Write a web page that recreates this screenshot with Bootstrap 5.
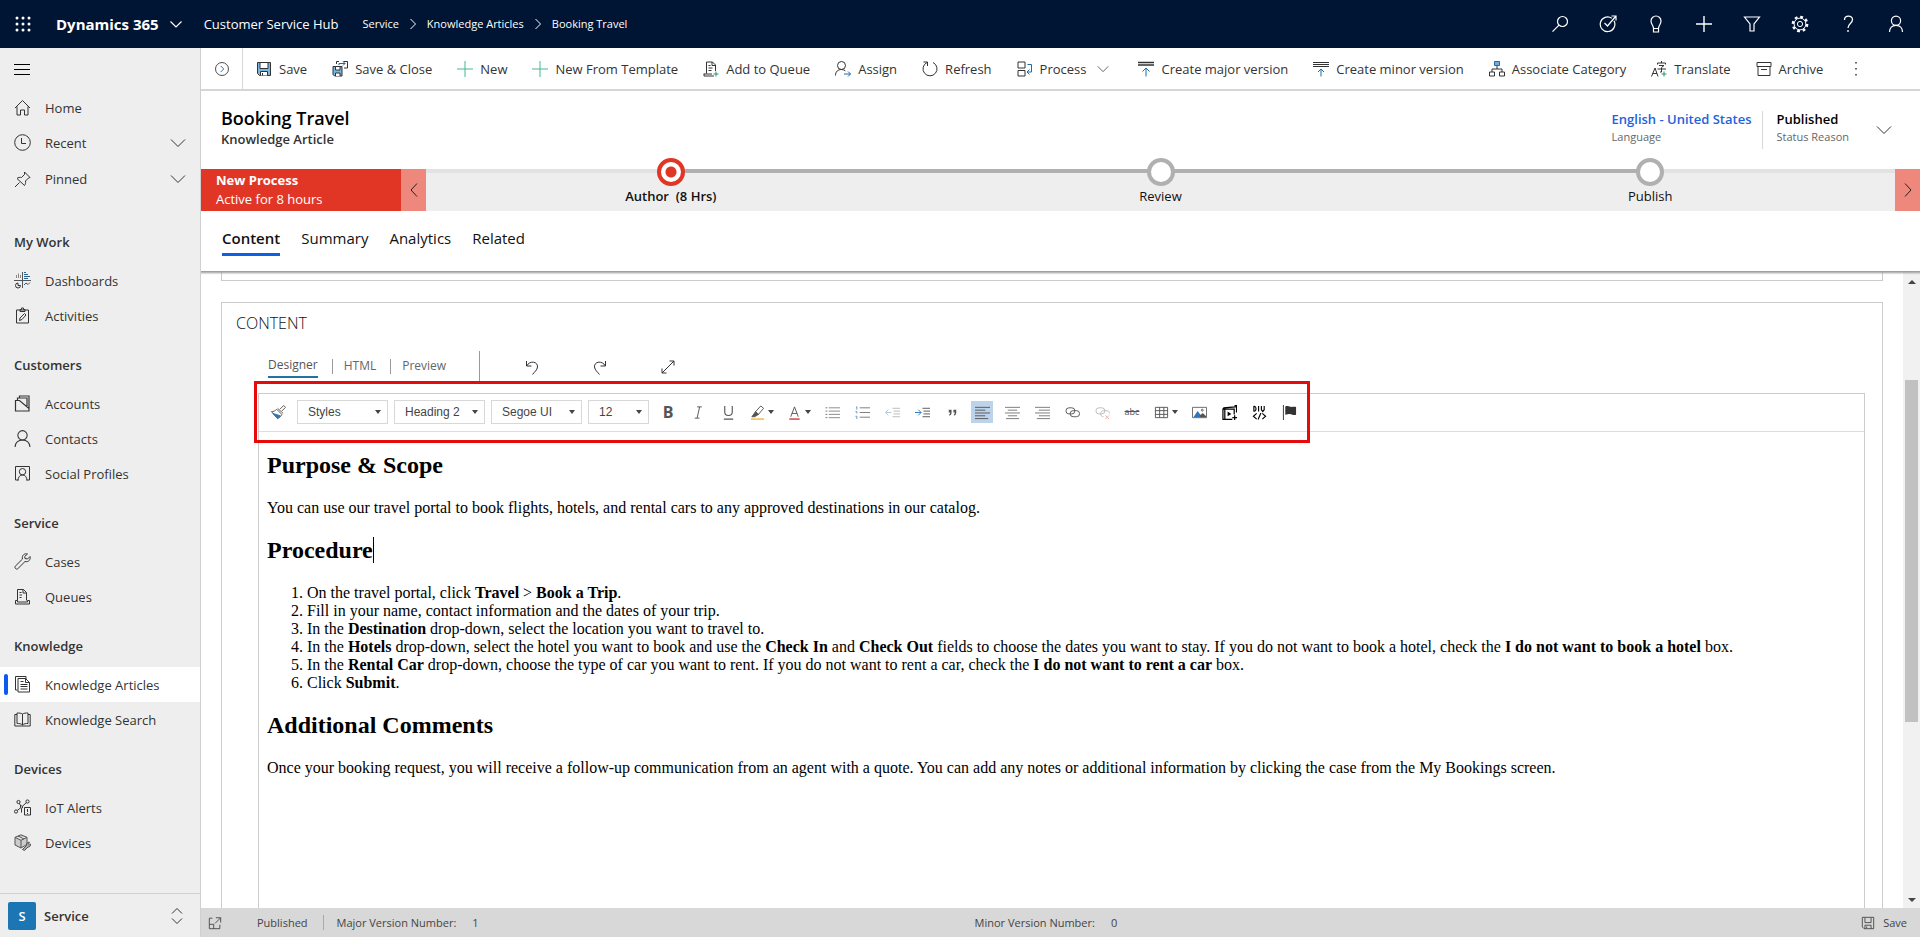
<!DOCTYPE html>
<html lang="en">
<head>
<meta charset="utf-8">
<meta name="viewport" content="width=device-width, initial-scale=1">
<title>Booking Travel - Knowledge Article - Dynamics 365</title>
<link href="https://cdn.jsdelivr.net/npm/bootstrap@5.3.0/dist/css/bootstrap.min.css" rel="stylesheet">
<style>
  :root { --navy:#001433; --panel:#eee; --line:#ccc; --ink:#333; --ui:"Open Sans","Noto Sans",sans-serif; }
  body { font-family:var(--ui); font-size:13px; line-height:20px; color:var(--ink); background:#fff; }
  a { color:inherit; text-decoration:none; }
  button { color:inherit; background:none; border:0; padding:0; font-size:inherit; line-height:inherit; }
  h1,h2,h3,p,ul,ol { margin:0; }
  svg { display:block; flex:none; fill:none; stroke:currentColor; width:16px; height:16px; }
  svg.w8 { width:8px; }
  svg.w12 { width:12px; }
  svg.w14 { width:14px; }
  .sb { font-weight:600; }
  .shrinkable { min-width:0; min-height:0; }

  .app-header { height:48px; background:var(--navy); color:#fff; }
  .app-header .waffle { width:38px; padding-left:15px; margin-right:18px; }
  .brand { font-size:15px; font-weight:700; margin-right:11px; }
  .hub { margin-left:22px; margin-right:24px; }
  .crumbs { font-size:11px; gap:10px; }
  .tools button { width:48px; height:48px; display:flex; align-items:center; justify-content:center; }
  .tools svg { width:18px; height:18px; }

  .side { width:201px; background:var(--panel); border-right:1px solid #d0d0d0; flex:none; }
  .side .burger { height:42px; padding-left:14px; }
  .side ul { list-style:none; padding:0; }
  .side li a, .side li button { height:35px; width:100%; display:flex; align-items:center; padding:0 14px; gap:14px; }
  .side li svg:first-child { width:17px; height:17px; }
  .side li.pinned > button { height:38px; }
  .side .first-group { margin-bottom:12px; }
  .side h2 { font-size:13px; line-height:20px; font-weight:600; padding:22px 14px 11px; }
  .side .here { background:#fff; position:relative; }
  .side .here::before { content:""; position:absolute; left:4px; top:7px; width:4px; height:21px; border-radius:2px; background:#0b5cee; }
  .area { height:44px; border-top:1px solid #d0d0d0; padding:0 17px 0 8px; }
  .area .tile { width:28px; height:28px; background:#1b76b3; color:#fff; border-radius:2px; }

  .cmd { height:43px; border-bottom:2px solid #d6d6d6; }
  .cmd .round { width:42px; border-right:1px solid #d8d8d8; }
  .cmd-list { padding-left:13px; gap:25px; }
  .cmd-list button, .cmd-list .pair { display:flex; align-items:center; gap:7px; white-space:nowrap; }
  .green { color:#47b98c; }

  .record { height:78px; padding:14px 28px 0 20px; }
  .record h1 { font-size:18px; line-height:26px; font-weight:600; color:#000; }
  .record .kind { line-height:16px; }
  .record .field { line-height:20px; padding:4px 0; }
  .record .field small { display:block; font-size:11px; line-height:16px; color:#666; }
  .record .split { width:1px; height:38px; background:#d8d8d8; margin:6px 13px 0 11px; }
  .record .more { margin:17px 0 0 27px; }
  .lang { color:#1f62dd; }

  .process { height:42px; background:var(--panel); flex:none; }
  .process .name { width:200px; background:#e13626; color:#fff; padding:2px 15px 0; line-height:19px; }
  .process .arrow { width:25px; background:#ef887c; color:#222; display:flex; align-items:center; justify-content:center; }
  .stage { flex:1; border-top:4px solid #b0b0b0; border-image:linear-gradient(90deg,#b0b0b0,#b0b0b0) 1; color:#111; display:flex; flex-direction:column; align-items:center; }
  .stage:first-of-type { border-image:linear-gradient(90deg,#e2e2e2 50%,#b0b0b0 50%) 1; }
  .stage:last-of-type { border-image:linear-gradient(90deg,#b0b0b0 50%,#e2e2e2 50%) 1; }
  .node { width:28px; height:28px; margin-top:-15px; border-radius:50%; border:4px solid #b0b0b0; background:#fff; flex:none; }
  .node.now { border-color:#e03626; background:radial-gradient(circle,#e03626 5px,#fff 6px); }

  .form-tabs { height:60px; padding:14px 21px 0; gap:21px; font-size:15px; line-height:26px; color:#111; box-shadow:0 1px 2px 1px #999; position:relative; flex:none; clip-path:inset(0 0 -4px 0); }
  .form-tabs a { padding-bottom:2px; height:31px; }
  .form-tabs .on { font-weight:600; border-bottom:3px solid #0d5fe3; }

  .sections { padding:0 20px; }
  .prev { height:10px; border:1px solid var(--line); border-top:0; margin-bottom:21px; }
  .sect { border:1px solid var(--line); border-bottom:0; padding:8px 17px 0 14px; }
  .sect > h2 { font-size:16px; line-height:24px; font-weight:300; color:#111; }
  .modes { font-size:12px; color:#666; margin-left:32px; margin-top:16px; }
  .modes .rule { width:1px; height:15px; background:#999; margin:0 11px 0 14px; }
  .modes .on { border-bottom:2px solid #2372a3; line-height:22px; color:#555; }
  .modes .bar { width:1px; height:30px; background:#999; margin-left:33px; }
  .modes .acts { gap:52px; margin-left:44px; color:#333; padding-top:2px; }
  .editor { margin-left:22px; margin-top:12px; border:1px solid var(--line); border-bottom:0; }
  .fmt { height:38px; border-bottom:1px solid #ddd; }
  .fmt-in { position:relative; width:max-content; height:36px; padding:0 5px 0 8px; }
  .fmt-in::after { content:""; position:absolute; inset:-13px -5px -13px -5px; border:3px solid #e60b0b; pointer-events:none; }
  .picks { gap:6px; }
  .fmt .form-select { width:91px; height:24px; padding:0 20px 0 10px; border:1px solid #d8d8d8; border-radius:0; color:#444; font:12px/22px "Liberation Sans",sans-serif; background-position:right 6px center; background-size:6px 4px;
    background-image:url("data:image/svg+xml,%3Csvg xmlns='http://www.w3.org/2000/svg' viewBox='0 0 6 4'%3E%3Cpath d='M0 0h6L3 4z' fill='%23444'/%3E%3C/svg%3E"); }
  .fmt .form-select.size { width:61px; }
  .fmt button { width:22px; height:22px; display:flex; align-items:center; justify-content:center; color:#555; }
  .fmt button svg { width:15px; height:15px; }
  .fmt button.drop { width:29px; gap:3px; }
  .fmt button.drop::after { content:""; border:3px solid transparent; border-top:4px solid #444; border-bottom:0; }
  .fmt .pressed { background:#bdd3ec; }
  .fmt .faint { opacity:.4; }
  .fmt .strike { font-size:9px; text-decoration:line-through; }
  .doc { font:16px/18px "Liberation Serif",serif; color:#000; padding:20px 8px; outline:0; }
  .doc h2 { font-size:24px; line-height:27px; font-weight:700; margin-bottom:20px; }
  .doc p, .doc ol { margin-bottom:20px; }
  .doc ol { padding-left:40px; }
  .caret { border-right:1px solid #000; }

  .vbar { width:17px; background:#f1f1f1; padding:9px 2px 6px; color:#444; }
  .vbar .up, .vbar .down { border:4px solid transparent; }
  .vbar .up { border-bottom-color:#444; border-top:0; }
  .vbar .down { border-top-color:#444; border-bottom:0; }
  .vbar .track { flex:1; width:100%; padding:96px 0 0; }
  .vbar .thumb { height:66%; background:#c1c1c1; }

  .status { height:29px; background:#d8d8d8; font-size:11px; color:#444; flex:none; }
  .status .left { width:45%; padding-left:7px; }
  .status .state { margin-left:35px; }
  .status .sep { width:1px; height:15px; background:#aaa; margin:0 13px 0 15px; }
  .status .keep { margin-right:13px; }
</style>
</head>
<body class="vh-100 d-flex flex-column overflow-hidden">

<svg class="d-none" aria-hidden="true">
  <symbol id="down" viewBox="0 0 16 16"><path d="M1 4.500l7 7 7-7"/></symbol>
  <symbol id="plus" viewBox="0 0 16 16"><path d="M8 0v16M0 8h16"/></symbol>
  <symbol id="person" viewBox="0 0 16 16"><circle cx="8" cy="5" r="4.400"/><path d="M1 16c0-4 3-6.600 7-6.600s7 2.600 7 6.600"/></symbol>
  <symbol id="save" viewBox="0 0 16 16"><path d="M1.500 1.500h13v13h-11l-2-2z" fill="#7db6e0"/><path d="M4 1.500h8v6H4z" fill="#fff"/><path d="M4.500 14.500v-4h7v4" fill="#fff"/><path d="M6.500 12v2.500"/></symbol>
</svg>

<header class="app-header d-flex align-items-center flex-shrink-0">
  <button class="waffle" aria-label="App launcher"><svg viewBox="0 0 16 16"><g fill="#fff" stroke="none"><circle cx="2" cy="2" r="1.500"/><circle cx="8" cy="2" r="1.500"/><circle cx="14" cy="2" r="1.500"/><circle cx="2" cy="8" r="1.500"/><circle cx="8" cy="8" r="1.500"/><circle cx="14" cy="8" r="1.500"/><circle cx="2" cy="14" r="1.500"/><circle cx="8" cy="14" r="1.500"/><circle cx="14" cy="14" r="1.500"/></g></svg></button>
  <a href="#" class="brand">Dynamics 365</a>
  <button aria-label="Switch app"><svg class="w12" viewBox="0 0 12 16"><path d="M.5 5.500L6 11l5.500-5.500" stroke-width="1.200"/></svg></button>
  <a href="#" class="hub">Customer Service Hub</a>
  <nav class="crumbs d-flex align-items-center" aria-label="Breadcrumb">
    <a href="#">Service</a><svg class="w8" viewBox="0 0 8 16"><path d="M1.500 3l5 5-5 5"/></svg>
    <a href="#">Knowledge Articles</a><svg class="w8" viewBox="0 0 8 16"><path d="M1.500 3l5 5-5 5"/></svg>
    <span>Booking Travel</span>
  </nav>
  <div class="tools d-flex ms-auto">
    <button aria-label="Search"><svg viewBox="0 0 18 18"><circle cx="11.500" cy="6.500" r="5" stroke-width="1.200"/><path d="M8 10.200L1.500 16.700" stroke-width="1.200"/></svg></button>
    <button aria-label="Task flow"><svg viewBox="0 0 18 18"><path d="M12.800 3.300A7.300 7.300 0 1 0 15 5.800M12.500 1h4.500v4.500M17 1L8.500 11l-3-3" stroke-width="1.200"/></svg></button>
    <button aria-label="Insights"><svg viewBox="0 0 18 18"><path d="M6.500 13.500c0-3-2.500-4-2.500-7.500a5 5 0 0 1 10 0c0 3.500-2.500 4.500-2.500 7.500v3.500h-5zM6.500 13.500h5" stroke-width="1.200"/></svg></button>
    <button aria-label="Quick create"><svg viewBox="0 0 18 18"><path d="M9 1v16M1 9h16" stroke-width="1.400"/></svg></button>
    <button aria-label="Filter"><svg viewBox="0 0 18 18"><path d="M1.500 2h15L11 9v7H7V9z" stroke-width="1.200"/></svg></button>
    <button aria-label="Settings"><svg viewBox="0 0 18 18"><circle cx="9" cy="9" r="2.600"/><circle cx="9" cy="9" r="5.900"/><circle cx="9" cy="9" r="7.200" stroke-width="2.300" stroke-dasharray="2.830 2.825"/></svg></button>
    <button aria-label="Help"><svg viewBox="0 0 18 18"><path d="M5.500 5c0-5 8-5 8-.5 0 4-4.500 4-4.500 8.500M9 15v2" stroke-width="1.300"/></svg></button>
    <button aria-label="Account"><svg viewBox="0 0 18 18"><circle cx="9" cy="5.700" r="4.600" stroke-width="1.200"/><path d="M2.500 17c0-4 2.500-6.700 6.500-6.700s6.500 2.700 6.500 6.700" stroke-width="1.200"/></svg></button>
  </div>
</header>

<div class="d-flex flex-fill shrinkable">
  <aside class="side d-flex flex-column">
    <button class="burger d-flex align-items-center" aria-label="Collapse menu"><svg viewBox="0 0 16 16"><path d="M0 3.500h16M0 8.500h16M0 13.500h16" stroke="#000"/></svg></button>
    <nav class="flex-fill" aria-label="Site map">
      <ul class="first-group">
        <li><a href="#"><svg viewBox="0 0 17 17"><path d="M1 9l7.500-7.500L16 9M3 7.500v8.500h3.500v-5h4v5H14V7.500"/></svg>Home</a></li>
        <li><button><svg viewBox="0 0 17 17"><circle cx="8.500" cy="8.500" r="7.800"/><path d="M7.500 4v5.500H12"/></svg>Recent<svg class="ms-auto"><use href="#down"/></svg></button></li>
        <li class="pinned"><button><svg viewBox="0 0 17 17"><path d="M1 16l4.500-4.500M10.500 1l5.500 5.500-1.500.5-3 3c.5 2-.3 3.500-1 4.500L3 7.500C4 6.500 6 6 7.500 6.500l3-3z"/></svg>Pinned<svg class="ms-auto"><use href="#down"/></svg></button></li>
      </ul>
      <h2>My Work</h2>
      <ul>
        <li><a href="#"><svg viewBox="0 0 17 17"><path d="M2.500 6V3M4.500 6V1.500M6.500 6V3" stroke="#888"/><path d="M8.500 0v16M0 8.500h17" stroke="#555"/><path d="M10 2.500h4M10 4.500h6M10 .5h2M10 6.500h4M10 13l2-2 2 1.500 2-2" stroke="#27618f"/><path d="M4 11a2.500 2.500 0 1 0 2.500 2.500H4z"/></svg>Dashboards</a></li>
        <li><a href="#"><svg viewBox="0 0 17 17"><path d="M2.500 3h12v13h-12zM6 4.500V2.500h1.500V1h2v1.500H11v2zM5.500 13.500l.5-2.500 4.500-4.500 1.500 1.500L8 12.500z"/></svg>Activities</a></li>
      </ul>
      <h2>Customers</h2>
      <ul>
        <li><a href="#"><svg viewBox="0 0 17 17"><path d="M1.500 5.500h4l9.500 8V16H1.500zM3.500 5V3h9.500v8M5.500 2.500V1H15v12" stroke-width="1.200"/></svg>Accounts</a></li>
        <li><a href="#"><svg><use href="#person"/></svg>Contacts</a></li>
        <li><a href="#"><svg viewBox="0 0 17 17"><path d="M4.500 15H1.500V1.500h14V15h-3"/><circle cx="8.500" cy="6.700" r="3.200"/><path d="M4 15.500c0-3.500 2-5.500 4.500-5.500s4.500 2 4.500 5.500"/></svg>Social Profiles</a></li>
      </ul>
      <h2>Service</h2>
      <ul>
        <li><a href="#"><svg viewBox="0 0 17 17"><path d="M13.500 1c-3-1-6 1.500-5 5L1.300 13.200c-1.300 1.500 1 3.800 2.500 2.500L11 8.500c3.500 1 6-2 5-5L13.500 6 11 5.500l-.3-2z"/></svg>Cases</a></li>
        <li><a href="#"><svg viewBox="0 0 17 17"><path d="M3.500 12.500v-11h6l3 3v8M9 1.500V5h3.500M1.500 12.500h2v1.500h10v-1.500h2V16h-14zM5.500 4.500h2M5.500 7h2.500M5.500 9.500h2"/></svg>Queues</a></li>
      </ul>
      <h2>Knowledge</h2>
      <ul>
        <li class="here"><a href="#" aria-current="page"><svg viewBox="0 0 17 17"><path d="M3.500 14H1.500V.5H12V3M4 2.500h7.500l4 4V16H4zM11.500 2.500v4h4M6.500 5.500h3M6.500 8.500h7M6.500 10.500h7M6.500 13h7"/></svg>Knowledge Articles</a></li>
        <li><a href="#"><svg viewBox="0 0 17 17"><path d="M8.500 3C7 2 5 2 3 2v10.500c2 0 4 0 5.500 1.500 1.500-1.500 3.500-1.500 5.500-1.500V2c-2 0-4 0-5.500 1zM8.500 3v11M3 3.500H.8V15h15.400V3.500H14"/></svg>Knowledge Search</a></li>
      </ul>
      <h2>Devices</h2>
      <ul>
        <li><a href="#"><svg viewBox="0 0 17 17"><circle cx="4.500" cy="3" r="1.600"/><circle cx="13.500" cy="2.500" r="1.600"/><circle cx="2" cy="12.500" r="1.600"/><circle cx="7.500" cy="8" r="1.200"/><path d="M5.300 4.300l1.500 2.700M8.500 7.200l4-3.700M6.700 8.800l-3.500 2.700M7.500 9.500v4M10.500 8.500h6V16h-6zM13.500 10v3M13.500 14v1"/></svg>IoT Alerts</a></li>
        <li><a href="#"><svg viewBox="0 0 17 17"><path d="M7 .8l6 2.500v7L7 14l-6-3V3.300zM1 3.300l6 3 6-3M7 6.300V14M4 2l6 3" fill="#ccc" stroke="#555"/><path d="M8.500 15.500l4-4c-.5-2 1-3.500 3-3.200L14.500 10l1 1 1.200-1c.3 2-1.200 3-2.700 3l-3.500 3.500z" fill="#aaa" stroke="#555"/></svg>Devices</a></li>
      </ul>
    </nav>
    <button class="area d-flex align-items-center">
      <span class="tile sb d-flex align-items-center justify-content-center">S</span>
      <span class="sb ms-2">Service</span>
      <svg class="w12 ms-auto" viewBox="0 0 12 16"><path d="M1 5.500l5-5 5 5M1 10.500l5 5 5-5"/></svg>
    </button>
  </aside>

  <main class="d-flex flex-column flex-fill shrinkable">
    <div class="cmd d-flex flex-shrink-0" role="toolbar" aria-label="Commands">
      <button class="round d-flex align-items-center justify-content-center" aria-label="Open record set"><svg class="w14" viewBox="0 0 16 16"><circle cx="8" cy="8" r="7.400"/><path d="M6.500 4.500L10 8l-3.500 3.500" stroke="#1b5e9e"/></svg></button>
      <div class="cmd-list d-flex align-items-center">
        <button><svg><use href="#save"/></svg>Save</button>
        <button><svg viewBox="0 0 16 16"><path d="M1 5.500h9V15H2.500L1 13.500z" fill="#7db6e0"/><path d="M3.500 5.500h4.500v3.500H3.500zM3.500 15v-3h4.500v3" fill="#fff"/><path d="M4.500 3V.5H7M11.500.5h4V7M15.500 7H12"/><path d="M7 4V2.500h6M11 .5l2 2-2 2" stroke="#1b6cab"/></svg>Save &amp; Close</button>
        <button><svg class="green"><use href="#plus"/></svg>New</button>
        <button><svg class="green"><use href="#plus"/></svg>New From Template</button>
        <button><svg viewBox="0 0 16 16"><path d="M3.500 12.500V1h6l3 3v6M9 1v3.500h3.500M1 12.500V15h10M1 13h8M5.500 4.500h2M5.500 7h4M5.500 9.500h3"/><path d="M13 10.500v5M10.500 13h5" stroke="#1a9a63"/></svg>Add to Queue</button>
        <button><svg viewBox="0 0 16 16"><circle cx="6.500" cy="4.500" r="4"/><path d="M.5 14.500c0-4 2.500-6 6-6 1.500 0 2.800.5 3.800 1.300"/><path d="M9 13h6.500M13 10.500l2.500 2.500-2.500 2.500" stroke="#1b6cab"/></svg>Assign</button>
        <button><svg viewBox="0 0 16 16"><path d="M5 1.500A7 7 0 1 0 11 1.500M5.500 5V1H1.500"/></svg>Refresh</button>
        <div class="pair"><button><svg viewBox="0 0 16 16"><path d="M1 1h7v6H1zM1 9.500h7v5.500H1z"/><path d="M10.500 3.500h4V11H10M12.500 8.500L10 11l2.500 2.500" stroke="#1b6cab"/></svg>Process</button>
        <button class="px-1" aria-label="More process commands"><svg class="w12"><use href="#down"/></svg></button></div>
        <button><svg viewBox="0 0 16 16"><path d="M0 1.500h16M0 4h16" stroke-width="1.300"/><path d="M8 15.500V7M4.500 10.500L8 7l3.500 3.500" stroke="#1b6cab"/></svg>Create major version</button>
        <button><svg viewBox="0 0 16 16"><path d="M0 1.500h16M0 3.500h16M0 5.500h16"/><path d="M8 15.500V8M5 11l3-3 3 3" stroke="#1b6cab"/></svg>Create minor version</button>
        <button><svg viewBox="0 0 16 16"><path d="M5.500.5h5v4h-5z" fill="#6fb0e0" stroke="#1b6cab"/><path d="M8 5v3M3 11V8h10v3M.5 11h5v4h-5zM10.500 11h5v4h-5z"/></svg>Associate Category</button>
        <button><svg viewBox="0 0 16 16"><path d="M.5 15.500L4 7l3 8.500M1.500 12.500h4.500M6.500 3.500V2h8v1.500M10.500 2V0M8 4.500h5L10.500 6.500V11H9M6.500 8h8.500"/><path d="M13 10.500v5M10.500 13h5" stroke="#1a9a63"/></svg>Translate</button>
        <button><svg viewBox="0 0 16 16"><path d="M1 1.500h14v4H1zM2 5.500v9h12v-9M5 8.500h6"/></svg>Archive</button>
        <button aria-label="More commands"><svg viewBox="0 0 16 16"><path d="M8 1v1.500M8 7v1.500M8 13v1.500" stroke-width="1.500"/></svg></button>
      </div>
    </div>

    <div class="record d-flex flex-shrink-0">
      <div class="flex-fill">
        <h1>Booking Travel</h1>
        <div class="kind sb">Knowledge Article</div>
      </div>
      <div class="d-flex align-items-start">
        <div class="field"><a href="#" class="lang sb">English - United States</a><small>Language</small></div>
        <div class="split"></div>
        <div class="field"><span class="sb text-black">Published</span><small>Status Reason</small></div>
        <button class="more" aria-label="Header details"><svg><use href="#down"/></svg></button>
      </div>
    </div>

    <div class="process d-flex">
      <header class="name"><div class="fw-bold">New Process</div><div>Active for 8 hours</div></header>
      <button class="arrow" aria-label="Previous stage"><svg viewBox="0 0 16 16"><path d="M11 1.500L5 8l6 6.500"/></svg></button>
      <div class="d-flex flex-fill">
        <div class="stage"><span class="node now"></span><span class="sb">Author&nbsp; (8 Hrs)</span></div>
        <div class="stage"><span class="node"></span><span>Review</span></div>
        <div class="stage"><span class="node"></span><span>Publish</span></div>
      </div>
      <button class="arrow" aria-label="Next stage"><svg viewBox="0 0 16 16"><path d="M5 1.500L11 8l-6 6.500"/></svg></button>
    </div>

    <nav class="form-tabs d-flex" aria-label="Form tabs">
      <a href="#" class="on">Content</a><a href="#">Summary</a><a href="#">Analytics</a><a href="#">Related</a>
    </nav>

    <div class="d-flex flex-fill overflow-hidden shrinkable">
      <div class="sections d-flex flex-column flex-fill">
        <div class="prev flex-shrink-0"></div>
        <section class="sect d-flex flex-column flex-fill">
          <h2>CONTENT</h2>
          <div class="modes d-flex align-items-center">
            <a href="#" class="on">Designer</a><span class="rule"></span><a href="#">HTML</a><span class="rule"></span><a href="#">Preview</a>
            <span class="bar"></span>
            <div class="acts d-flex">
              <button aria-label="Undo"><svg viewBox="0 0 16 16"><path d="M2.500 2v5h5M2.500 7C6 1 14 2.500 13.500 8c-.3 3-3 5-5 7.500"/></svg></button>
              <button aria-label="Redo"><svg viewBox="0 0 16 16"><path d="M13.500 2v5h-5M13.500 7C10 1 2 2.500 2.500 8c.3 3 3 5 5 7.500"/></svg></button>
              <button aria-label="Expand"><svg viewBox="0 0 16 16"><path d="M2 14L14 2M9.500 2H14v4.500M2 9.500V14h4.500"/></svg></button>
            </div>
          </div>
          <div class="editor flex-fill">
            <div class="fmt">
              <div class="fmt-in d-flex align-items-center gap-2" role="toolbar" aria-label="Formatting">
                <button aria-label="Copy format"><svg viewBox="0 0 16 16"><path d="M9.500 4.500L13.500.5l2 2-4 4M6 4.500l5.500 5.500M7 3.500l6 5.500M6 4.500C4.500 6.500 2.500 7 .5 7L7 14.500C9 13.500 11 12 11.500 10"/><path d="M2 9l8 2.500L7 14.500z" fill="#2f75b8" stroke="#2f75b8"/></svg></button>
                <div class="picks d-flex">
                  <select class="form-select" aria-label="Styles"><option>Styles</option></select>
                  <select class="form-select" aria-label="Paragraph format"><option>Heading 2</option></select>
                  <select class="form-select" aria-label="Font"><option>Segoe UI</option></select>
                  <select class="form-select size" aria-label="Size"><option>12</option></select>
                </div>
                <button class="fw-bold fs-6" aria-label="Bold">B</button>
                <button aria-label="Italic"><svg viewBox="0 0 16 16"><path d="M6.500 2h5M4 14h5M9.200 2L6.500 14"/></svg></button>
                <button aria-label="Underline"><svg viewBox="0 0 16 16"><path d="M4 1v6.500c0 5 8 5 8 0V1M3 15h10" stroke-width="1.200"/></svg></button>
                <button class="drop" aria-label="Highlight"><svg viewBox="0 0 16 16"><path d="M6 7l5.500-6 3 2.500L9 10z"/><path d="M6 7l3 3-4 2.500H2z" fill="#555"/><path d="M1 15h14" stroke="#efb93c" stroke-width="1.500"/></svg></button>
                <button class="drop" aria-label="Text colour"><svg viewBox="0 0 16 16"><path d="M4 12.500L8 2l4 10.500M5.200 9h5.600"/><path d="M2.500 15h11" stroke="#d23b33" stroke-width="1.500"/></svg></button>
                <button aria-label="Bulleted list"><svg viewBox="0 0 16 16"><path d="M4 3h12M4 6.500h12M4 10h12M4 13.500h12" stroke="#888"/><path d="M.5 3h2M.5 6.500h2M.5 10h2M.5 13.500h2" stroke="#777"/></svg></button>
                <button aria-label="Numbered list"><svg viewBox="0 0 16 16"><path d="M5 3h11M5 8h11M5 13h11" stroke="#777"/><path d="M1 2h1v3M.5 7h1.500v2M.5 12h1.500v3" stroke="#5a93cc"/></svg></button>
                <button class="faint" aria-label="Decrease indent"><svg viewBox="0 0 16 16"><path d="M8 3.500h8M9 6.500h7M9 9.500h7M8 12.500h8"/><path d="M7 8H.5M3.500 5L.5 8l3 3" stroke="#2f75b8"/></svg></button>
                <button aria-label="Increase indent"><svg viewBox="0 0 16 16"><path d="M8 3.500h8M9 6.500h7M9 9.500h7M8 12.500h8"/><path d="M0 8h6.500M3.500 5l3 3-3 3" stroke="#2f75b8"/></svg></button>
                <button aria-label="Block quote"><svg viewBox="0 0 16 16"><path d="M4 5h3v3c0 2-1 3-2.500 3.500V10C5.300 9.500 5.500 9 5.500 8H4zM9 5h3v3c0 2-1 3-2.500 3.500V10c.8-.5 1-1 1-2H9z" fill="#555" stroke="none"/></svg></button>
                <button class="pressed" aria-label="Align left" aria-pressed="true"><svg viewBox="0 0 16 16"><path d="M0 2.500h16M0 5.500h11M0 8.500h16M0 11.500h11M0 14.500h14"/></svg></button>
                <button aria-label="Align center"><svg viewBox="0 0 16 16"><path d="M0 2.500h16M3 5.500h10M0 8.500h16M3 11.500h10M1 14.500h14" stroke="#777"/></svg></button>
                <button aria-label="Align right"><svg viewBox="0 0 16 16"><path d="M0 2.500h16M4 5.500h12M0 8.500h16M4 11.500h12M2 14.500h14" stroke="#777"/></svg></button>
                <button aria-label="Link"><svg viewBox="0 0 16 16"><rect x="1" y="3" width="9.500" height="6.500" rx="3.200"/><rect x="5.500" y="6" width="10" height="6.500" rx="3.200"/></svg></button>
                <button class="faint" aria-label="Unlink"><svg viewBox="0 0 16 16"><rect x="1" y="3" width="9.500" height="6.500" rx="3.200"/><path d="M9 12.500c-4 0-4-6.500 0-6.500h3.500c2 0 3 1.500 3 3"/><path d="M11 11l4 4M15 11l-4 4" stroke="#d23b33"/></svg></button>
                <button class="strike" aria-label="Strikethrough">abc</button>
                <button class="drop" aria-label="Table"><svg viewBox="0 0 16 16"><path d="M1.500 2.500h13v11h-13zM1.500 6h13M1.500 10h13M6 2.500v11M10.500 2.500v11"/></svg></button>
                <button aria-label="Image"><svg viewBox="0 0 16 16"><path d="M.5 2.500h15v11H.5z" stroke="#666"/><path d="M1.500 13L6 6.500l5 6.500z" fill="#2f75b8" stroke="none"/><path d="M8.500 11l3-2.500 3.500 3.500v1H9z" fill="#555" stroke="none"/><circle cx="11" cy="5.500" r="1" stroke="#555"/></svg></button>
                <button class="text-black" aria-label="Video"><svg viewBox="0 0 16 16"><path d="M11 15.300H1V4.500h12V10M3 4.500v10.500M1 4.500L2 3l12-1V.5h1.500V8" stroke-width="1.300"/><path d="M6 7l4 2.500L6 12z" fill="#000" stroke="none"/><path d="M13.500 11v5M11 13.500h5" stroke-width="1.300"/></svg></button>
                <button class="text-black" aria-label="Insert div"><svg viewBox="0 0 16 16"><path d="M2 1v6M2 1.500c3-.5 3 5.500 0 5M7 1v6M10 1v4l1.500 2L13 5V1M5 9l-3.500 3L5 15M11 9l3.500 3-3.500 3M9.500 8.500l-3 7" stroke-width="1.200"/></svg></button>
                <button aria-label="Anchor"><svg viewBox="0 0 16 16"><path d="M1.500 0v16" stroke="#333"/><path d="M3.500 1.500c3-1.500 5 .5 6.500.5s3-.5 5 0v8.500c-3 1-5-1-6.500-1s-3 .5-5 1z" fill="#333" stroke="none"/></svg></button>
              </div>
            </div>
            <article class="doc" contenteditable="true" spellcheck="false" aria-label="Article content">
              <h2>Purpose &amp; Scope</h2>
              <p>You can use our travel portal to book flights, hotels, and rental cars to any approved destinations in our catalog.</p>
              <h2><span class="caret">Procedure</span></h2>
              <ol>
                <li>On the travel portal, click <b>Travel</b> &gt; <b>Book a Trip</b>.</li>
                <li>Fill in your name, contact information and the dates of your trip.</li>
                <li>In the <b>Destination</b> drop-down, select the location you want to travel to.</li>
                <li>In the <b>Hotels</b> drop-down, select the hotel you want to book and use the <b>Check In</b> and <b>Check Out</b> fields to choose the dates you want to stay. If you do not want to book a hotel, check the <b>I do not want to book a hotel</b> box.</li>
                <li>In the <b>Rental Car</b> drop-down, choose the type of car you want to rent. If you do not want to rent a car, check the <b>I do not want to rent a car</b> box.</li>
                <li>Click <b>Submit</b>.</li>
              </ol>
              <h2>Additional Comments</h2>
              <p>Once your booking request, you will receive a follow-up communication from an agent with a quote. You can add any notes or additional information by clicking the case from the My Bookings screen.</p>
            </article>
          </div>
        </section>
      </div>
      <div class="vbar d-flex flex-column align-items-center" aria-hidden="true"><i class="up"></i><div class="track"><div class="thumb"></div></div><i class="down"></i></div>
    </div>

    <footer class="status d-flex align-items-center">
      <div class="left d-flex align-items-center">
        <button aria-label="Pop out"><svg class="w14" viewBox="0 0 16 16"><path d="M5 2.500H1.500v12h12V10M1.500 9.500h5v5M9 2h5.500v5.500M14.500 2L8 8.500"/></svg></button>
        <span class="state">Published</span><span class="sep"></span>
        <span>Major Version Number:</span><span class="ms-3">1</span>
      </div>
      <span>Minor Version Number:</span><span class="ms-3">0</span>
      <button class="keep ms-auto d-flex align-items-center gap-2"><svg class="w14" viewBox="0 0 16 16"><path d="M1.500 1.500h13v13h-11l-2-2zM4.500 2v5.500h7V2M4.500 14.500v-4h7v4M6.500 12v2"/></svg>Save</button>
    </footer>
  </main>
</div>
<script src="https://cdn.jsdelivr.net/npm/bootstrap@5.3.0/dist/js/bootstrap.bundle.min.js"></script>
</body>
</html>
